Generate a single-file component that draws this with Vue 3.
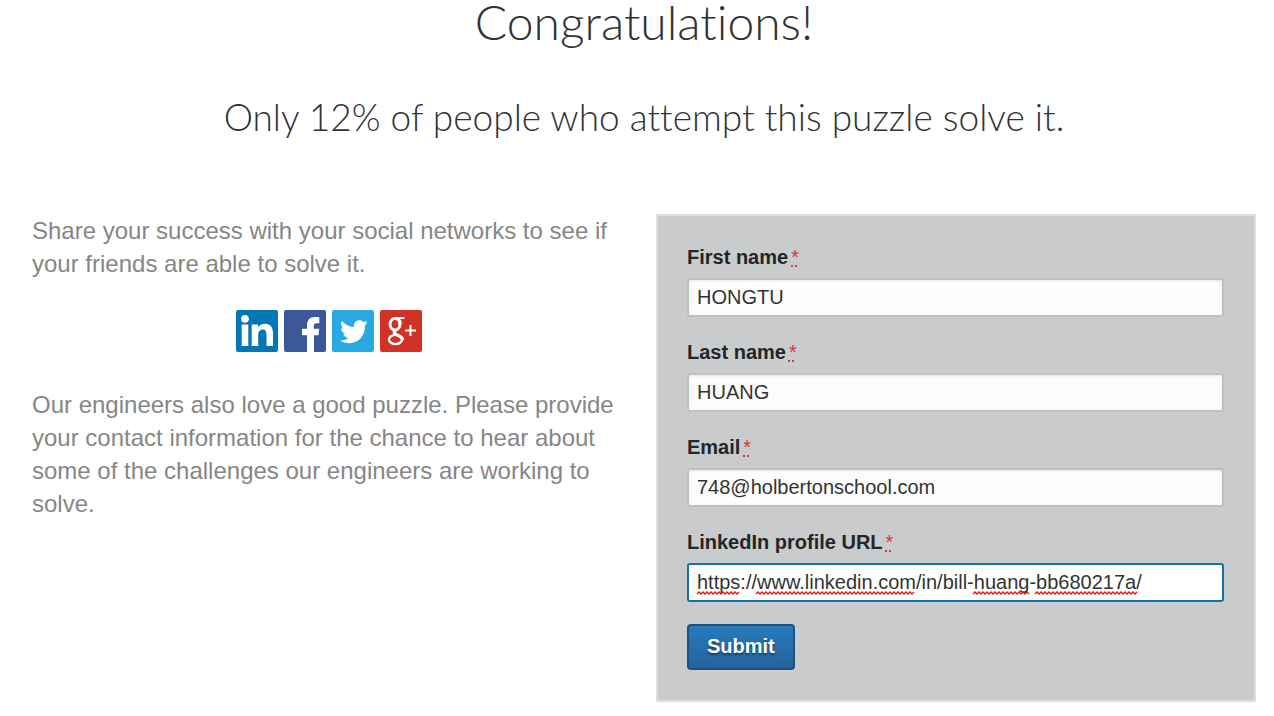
<script setup>
import { reactive } from 'vue'

const fields = reactive([
  { id: 'first-name', label: 'First name', type: 'text', value: 'HONGTU' },
  { id: 'last-name', label: 'Last name', type: 'text', value: 'HUANG' },
  { id: 'email', label: 'Email', type: 'email', value: '748@holbertonschool.com' },
  {
    id: 'profile-url',
    label: 'LinkedIn profile URL',
    type: 'text',
    value: 'https://www.linkedin.com/in/bill-huang-bb680217a/',
    active: true,
    marks: [[10, 43], [69, 159], [286, 56], [348, 102]],
  },
])

// Zigzag underline, two pixels per stroke
function wave([x, width]) {
  let d = `M${x} 3`
  for (let i = 1; i * 2 <= width; i++) d += `L${x + i * 2} ${i % 2 ? 1 : 3}`
  return d
}
</script>

<template>
  <main class="page">
    <header class="intro">
      <h1>Congratulations!</h1>
      <h2>Only 12% of people who attempt this puzzle solve it.</h2>
    </header>

    <div class="columns">
      <section class="copy">
        <p>Share your success with your social networks to see if your friends are able to solve it.</p>
        <nav class="social" aria-label="Share">
          <a href="#" aria-label="LinkedIn">
            <svg viewBox="0 0 42 42">
              <rect width="42" height="42" rx="2" fill="#0177b5" />
              <g fill="#fff">
                <circle cx="9" cy="8.800" r="3.900" />
                <path d="M5.700 14.500h6.600V36H5.700zM15.700 14.500H22v2.700c1.500-2.300 3.800-3.500 6.800-3.500 5.700 0 8.200 3.500 8.200 9.300v13h-6.500V25c0-3.500-.9-5.500-3.600-5.500-3.100 0-4.700 2.200-4.700 5.700V36h-6.500z" />
              </g>
            </svg>
          </a>
          <a href="#" aria-label="Facebook">
            <svg viewBox="0 0 42 42">
              <rect width="42" height="42" rx="2" fill="#3b5998" />
              <path fill="#fff" d="M23 42V25.300h-5v-6.600h5v-3.200c0-5.800 3-8.500 8-8.500 2 0 3.300.1 4.300.3v5.900h-2.600c-2.300 0-3 1.200-3 3.200v2.300h5.500l-.7 6.600h-4.500V42z" />
            </svg>
          </a>
          <a href="#" aria-label="Twitter">
            <svg viewBox="0 0 42 42">
              <rect width="42" height="42" rx="2" fill="#29a9e1" />
              <path fill="#fff" d="M35.500 12.200c-1 .8-1.800 1.100-2.700 1.300 1-.7 1.700-1.600 2.100-2.800-1.200.7-2.300 1.100-3.600 1.300-4-4-10.200-.5-9.300 5-4.800-.3-8.700-2.300-11.900-6.100-1.800 3.300-.7 6 1.700 7.900-.9 0-1.800-.3-2.600-.8 0 3.200 1.800 5.100 4.600 6-.8.2-1.700.2-2.500 0 .8 2.400 2.600 3.800 5.400 4-2.500 1.900-5.200 2.700-8.600 2.400C18 37 33.300 31.800 33 15.200c1-.8 1.800-1.800 2.500-3z" />
            </svg>
          </a>
          <a href="#" aria-label="Google Plus">
            <svg viewBox="0 0 42 42">
              <rect width="42" height="42" rx="2" fill="#d03228" />
              <g fill="none" stroke="#fff">
                <ellipse cx="15" cy="14.200" rx="4.900" ry="5.800" stroke-width="3" />
                <path stroke-width="1.800" d="M15 8.200h9.500M18.500 9c2 1 2.500 3 2.300 5" />
                <path stroke-width="3" d="M16 20c-2.500 1.700-2.500 3 0 4.300 3.500 1.800 6.800 2.600 6.800 5.600" />
                <ellipse cx="15.500" cy="29.500" rx="6.500" ry="4.600" stroke-width="2.400" />
                <path stroke-width="2" d="M30.500 15v11M25 20.500h11" />
              </g>
            </svg>
          </a>
        </nav>
        <p>Our engineers also love a good puzzle. Please provide your contact information for the chance to hear about some of the challenges our engineers are working to solve.</p>
      </section>

      <form class="panel" @submit.prevent>
        <div v-for="field in fields" :key="field.id" class="field">
          <label :for="field.id">{{ field.label }}<abbr title="required">*</abbr></label>
          <div class="control">
            <input :id="field.id" v-model="field.value" :type="field.type" :class="{ active: field.active }" spellcheck="false" required />
            <svg v-if="field.marks" class="spelling" aria-hidden="true">
              <path v-for="mark in field.marks" :key="mark[0]" :d="wave(mark)" />
            </svg>
          </div>
        </div>
        <button type="submit">Submit</button>
      </form>
    </div>
  </main>
</template>

<style>
body {
  margin: 0;
  background: #fff;
}
</style>

<style scoped>
.page {
  padding: 0 18px 14px 32px;
  font-family: "Liberation Sans", Arial, sans-serif;
  color: #868686;
}
.intro {
  text-align: center;
  color: #303336;
  font-family: Lato, "Open Sans", sans-serif;
  font-variant-ligatures: none;
}
h1,
h2 {
  margin: 0;
  font-weight: 300;
}
h1 {
  font-size: 48px;
  line-height: 44px;
}
h2 {
  margin-top: 46px;
  font-size: 37px;
  line-height: 54px;
}
.columns {
  display: grid;
  grid-template-columns: 1fr 1fr;
  gap: 24px;
  margin-top: 70px;
}
.copy p {
  margin: 0;
  font-size: 24px;
  line-height: 33px;
}
.social {
  display: flex;
  justify-content: center;
  margin: 30px 0 36px;
}
.social a {
  width: 42px;
  height: 42px;
  margin-right: 6px;
}
.social svg {
  display: block;
  width: 100%;
}
.panel {
  padding: 27px 30px 30px 29px;
  border: 2px solid #dddedf;
  background: #cacbcc;
}
.field {
  margin-bottom: 21px;
}
label {
  display: block;
  margin-bottom: 7px;
  color: #222629;
  font-size: 20px;
  font-weight: bold;
  line-height: 28px;
}
.field:last-of-type {
  margin-bottom: 22px;
}
abbr {
  margin-left: 3px;
  color: #d9363e;
  font-weight: normal;
  text-decoration: underline dotted;
}
.control {
  position: relative;
}
input {
  display: block;
  box-sizing: border-box;
  width: 100%;
  height: 39px;
  padding: 0 8px;
  border: 2px solid #bfc0c1;
  border-radius: 3px;
  background: #fdfdfd;
  box-shadow: inset 0 1px 3px #e4e4e4;
  color: #333;
  font: 20px "Liberation Sans", Arial, sans-serif;
  outline: none;
}
input.active,
input:focus {
  border-color: #0f72ad;
  background: #fff;
  box-shadow: none;
}
.spelling {
  position: absolute;
  left: 0;
  bottom: 7px;
  width: 100%;
  height: 4px;
  pointer-events: none;
}
.spelling path {
  fill: none;
  stroke: #e01818;
  stroke-width: 1.4;
}
button {
  display: block;
  height: 46px;
  padding: 0 18px 2px;
  border: 2px solid #1d5181;
  border-radius: 4px;
  background: linear-gradient(#287bbc, #23639a);
  color: #fff;
  font: bold 20px "Liberation Sans", Arial, sans-serif;
  text-shadow: 0 2px 2px rgba(0, 0, 0, 0.45);
}
</style>
